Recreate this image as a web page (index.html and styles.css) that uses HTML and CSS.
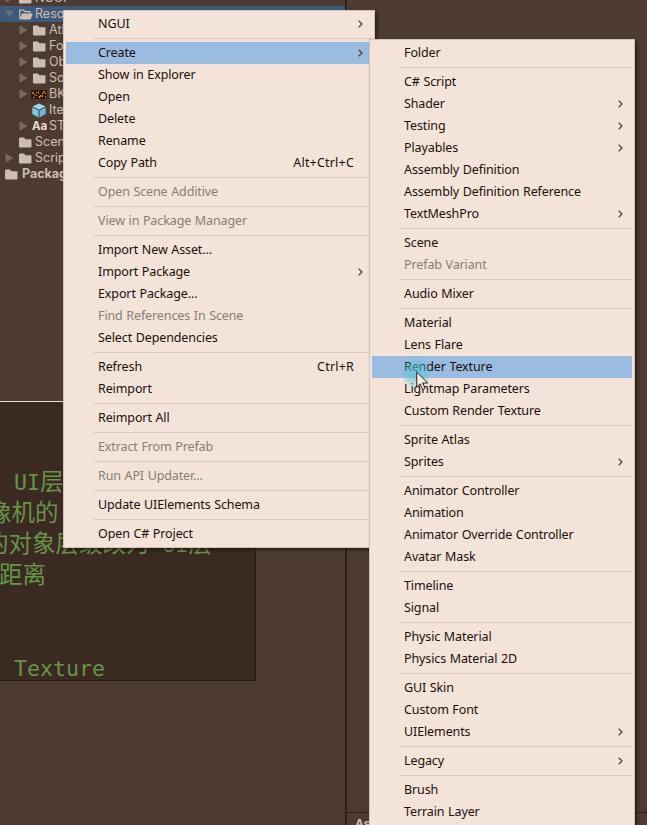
FILE: index.html
```html
<!DOCTYPE html>
<html lang="en">
<head>
<meta charset="utf-8">
<title>Project</title>
<link rel="stylesheet" href="styles.css">
</head>
<body>
<svg width="0" height="0" class="defs" aria-hidden="true">
  <symbol id="folder" viewBox="0 0 13 11"><path d="M0 1.6Q0 .5 1 .5H5L6.3 2.2H11.6Q12.5 2.2 12.5 3.2V9.6Q12.5 10.5 11.6 10.5H1Q0 10.5 0 9.6Z" fill="#cdbdb3"/></symbol>
  <symbol id="folder-open" viewBox="0 0 14 11"><path d="M.7 9.8V1.2H4.6L5.8 2.7H11V4.4" fill="none" stroke="#cdbdb3" stroke-width="1.2"/><path d="M3 4.4H13.8L11.6 10.4H.6Z" fill="#cdbdb3"/></symbol>
  <symbol id="right" viewBox="0 0 9 10"><path d="M.5 .2L8.6 5L.5 9.8Z" fill="#75685f"/></symbol>
  <symbol id="down" viewBox="0 0 10 9"><path d="M.5 .8H9.5L5 8.4Z" fill="#63727f"/></symbol>
  <symbol id="chev" viewBox="0 0 5 8"><path d="M.7 .8L4 4L.7 7.2" fill="none" stroke="#4a3f3a" stroke-width="1.2"/></symbol>
</svg>
<div class="app">
  <div class="left">
    <div class="tree">
      <div class="node d1"><svg class="arrow"><use href="#right"/></svg><svg class="ico"><use href="#folder"/></svg><span>NGUI</span></div>
      <div class="node d1 selected"><svg class="arrow"><use href="#down"/></svg><svg class="ico open"><use href="#folder-open"/></svg><span>Resources</span></div>
      <div class="node d2"><svg class="arrow"><use href="#right"/></svg><svg class="ico"><use href="#folder"/></svg><span>Atlas</span></div>
      <div class="node d2"><svg class="arrow"><use href="#right"/></svg><svg class="ico"><use href="#folder"/></svg><span>Font</span></div>
      <div class="node d2"><svg class="arrow"><use href="#right"/></svg><svg class="ico"><use href="#folder"/></svg><span>Obj</span></div>
      <div class="node d2"><svg class="arrow"><use href="#right"/></svg><svg class="ico"><use href="#folder"/></svg><span>Sound</span></div>
      <div class="node d2"><svg class="arrow"><use href="#right"/></svg><svg class="ico tex" viewBox="0 0 16 9"><path d="M0 0H16V9H0Z" fill="#301810"/><path d="M1 2h2v2H1zM4 5h2v1H4zM7 1h1v3H7zM9 5h3v2H9zM12 1h2v2h-2zM2 7h2v1H2zM14 6h1v2h-1z" fill="#c4652c"/><path d="M5 2h1v1H5zM8 6h1v2H8zM11 3h1v1h-1zM3 4h1v1H3zM14 3h1v1h-1z" fill="#e0a070"/></svg><span>BK</span></div>
      <div class="node d2"><svg class="arrow"></svg><svg class="ico cube" viewBox="0 0 14 15"><path d="M7 .5L13.5 3.5L7 6.8L.5 3.5Z" fill="#9bd7f3"/><path d="M.3 4.5L6.5 7.6V14.5L.3 11Z" fill="#7fc6ea"/><path d="M13.7 4.5L7.5 7.6V14.5L13.7 11Z" fill="#6ab6dd"/></svg><span>Item</span></div>
      <div class="node d2"><svg class="arrow"><use href="#right"/></svg><b class="ico aa">Aa</b><span>ST</span></div>
      <div class="node d1"><svg class="arrow"></svg><svg class="ico"><use href="#folder"/></svg><span>Scenes</span></div>
      <div class="node d1"><svg class="arrow"><use href="#right"/></svg><svg class="ico"><use href="#folder"/></svg><span>Scripts</span></div>
      <div class="node d0"><svg class="ico"><use href="#folder"/></svg><b>Packages</b></div>
    </div>
    <div class="code">
      <div class="line a">: UI<span class="han">层</span></div>
      <div class="line b"><span class="han">像机的</span></div>
      <div class="line c"><span class="han">的对象层级改为</span> UI<span class="han">层</span></div>
      <div class="line d"><span class="han">距离</span></div>
      <div class="line"></div>
      <div class="line"></div>
      <div class="line e">Texture</div>
    </div>
  </div>
  <div class="right"><div class="footer">Assets</div></div>
</div>

<div class="menu main">
  <div class="item">NGUI<svg class="chev"><use href="#chev"/></svg></div>
  <hr>
  <div class="item active">Create<svg class="chev"><use href="#chev"/></svg></div>
  <div class="item">Show in Explorer</div>
  <div class="item">Open</div>
  <div class="item">Delete</div>
  <div class="item">Rename</div>
  <div class="item">Copy Path<span class="key">Alt+Ctrl+C</span></div>
  <hr>
  <div class="item off">Open Scene Additive</div>
  <hr>
  <div class="item off">View in Package Manager</div>
  <hr>
  <div class="item">Import New Asset...</div>
  <div class="item">Import Package<svg class="chev"><use href="#chev"/></svg></div>
  <div class="item">Export Package...</div>
  <div class="item off">Find References In Scene</div>
  <div class="item">Select Dependencies</div>
  <hr>
  <div class="item">Refresh<span class="key">Ctrl+R</span></div>
  <div class="item">Reimport</div>
  <hr>
  <div class="item">Reimport All</div>
  <hr>
  <div class="item off">Extract From Prefab</div>
  <hr>
  <div class="item off">Run API Updater...</div>
  <hr>
  <div class="item">Update UIElements Schema</div>
  <hr>
  <div class="item">Open C# Project</div>
</div>

<div class="menu sub">
  <div class="item">Folder</div>
  <hr>
  <div class="item">C# Script</div>
  <div class="item">Shader<svg class="chev"><use href="#chev"/></svg></div>
  <div class="item">Testing<svg class="chev"><use href="#chev"/></svg></div>
  <div class="item">Playables<svg class="chev"><use href="#chev"/></svg></div>
  <div class="item">Assembly Definition</div>
  <div class="item">Assembly Definition Reference</div>
  <div class="item">TextMeshPro<svg class="chev"><use href="#chev"/></svg></div>
  <hr>
  <div class="item">Scene</div>
  <div class="item off">Prefab Variant</div>
  <hr>
  <div class="item">Audio Mixer</div>
  <hr>
  <div class="item">Material</div>
  <div class="item">Lens Flare</div>
  <div class="item active">Render Texture</div>
  <div class="item">Lightmap Parameters</div>
  <div class="item">Custom Render Texture</div>
  <hr>
  <div class="item">Sprite Atlas</div>
  <div class="item">Sprites<svg class="chev"><use href="#chev"/></svg></div>
  <hr>
  <div class="item">Animator Controller</div>
  <div class="item">Animation</div>
  <div class="item">Animator Override Controller</div>
  <div class="item">Avatar Mask</div>
  <hr>
  <div class="item">Timeline</div>
  <div class="item">Signal</div>
  <hr>
  <div class="item">Physic Material</div>
  <div class="item">Physics Material 2D</div>
  <hr>
  <div class="item">GUI Skin</div>
  <div class="item">Custom Font</div>
  <div class="item">UIElements<svg class="chev"><use href="#chev"/></svg></div>
  <hr>
  <div class="item">Legacy<svg class="chev"><use href="#chev"/></svg></div>
  <hr>
  <div class="item">Brush</div>
  <div class="item">Terrain Layer</div>
</div>
<div class="halo"></div>
<svg class="cursor" viewBox="0 0 13 20"><path d="M.7 1V16.2L4.2 12.9L6.7 18.6L9.2 17.5L6.7 12H11.8Z" fill="#f6e9e1" stroke="#30241f" stroke-width="1"/></svg>
</body>
</html>
```

FILE: styles.css
```css
* { box-sizing: border-box; }
body { margin: 0; width: 647px; height: 825px; overflow: hidden; position: relative; background: #4d3b32; font-family: "Noto Sans", sans-serif; }
.defs { position: absolute; }
.app { display: flex; height: 825px; }
.left { width: 345px; display: flex; flex-direction: column; overflow: hidden; }
.tree { height: 401px; font: 12.5px/16px Inter, sans-serif; color: #cdbdb3; overflow: hidden; }
.node { display: flex; align-items: center; height: 16px; white-space: nowrap; }
.node:first-child { margin-top: -10px; }
.node.selected { background: #3f5a78; }
.d0, .d1 { padding-left: 5px; }
.d2 { padding-left: 19px; }
.arrow { width: 9px; height: 10px; margin-right: 5px; flex: none; }
.ico { width: 13px; height: 11px; margin-right: 3px; flex: none; }
.d0 .ico { margin-right: 4px; }
.ico.open { width: 14px; margin-right: 2px; }
.ico.tex { width: 16px; height: 9px; margin-left: -2px; margin-right: 2px; }
.ico.cube { width: 14px; height: 15px; margin-left: -1px; }
.ico.aa { width: 15px; margin-left: -1px; margin-right: 2px; line-height: 11px; font-size: 11.5px; letter-spacing: -.2px; color: #ecdcd2; }
.code { width: 256px; height: 280px; border: 1px solid #281b15; border-top-color: #eadbd1; border-left: 0; background: #3a2a22; padding-top: 65px; overflow: hidden; font-family: "DejaVu Sans Mono", "Noto Sans CJK SC", monospace; font-size: 21.6px; color: #669449; }
.line { height: 31px; line-height: 31px; white-space: pre; }
.han { font-family: "Noto Sans CJK SC", sans-serif; font-size: 23.5px; line-height: 1; }
.line.a { margin-left: -12px; }
.line.b { margin-left: -12px; }
.line.c { margin-left: -15px; }
.line.d { margin-left: -1px; }
.line.e { margin-left: 14px; }
.right { flex: 1; border-left: 2px solid #2e201a; display: flex; flex-direction: column; justify-content: flex-end; }
.footer { height: 13px; border-top: 1px solid #2e201a; padding-left: 8px; font: bold 12px/22px Inter, sans-serif; color: #cdbdb3; overflow: hidden; }
.menu { position: absolute; padding: 2px; border: 1px solid #d3c3ba; background: #f4e3d9; color: #1c100b; font-size: 12.5px; box-shadow: 2px 2px 3px rgba(20, 8, 2, .55); }
.main { left: 63px; top: 10px; width: 312px; }
.sub { left: 369px; top: 39px; width: 266px; }
.item { height: 22px; line-height: 20px; padding: 0 9px 1px 32px; display: flex; align-items: center; white-space: nowrap; letter-spacing: -.11px; word-spacing: .5px; }
.active { background: #99bce0; }
.off { color: #8b7d75; }
.chev { width: 5px; height: 8px; margin-left: auto; flex: none; }
.key { margin-left: auto; margin-right: 9px; letter-spacing: .2px; }
hr { margin: 3px 0 3px 28px; height: 1px; border: 0; background: #d7c7be; }
.halo { position: absolute; left: 401px; top: 358px; width: 30px; height: 30px; border-radius: 50%; background: radial-gradient(circle, rgba(90, 200, 215, .6) 0 30%, rgba(90, 200, 215, .25) 62%, rgba(90, 200, 215, 0) 72%); }
.cursor { position: absolute; left: 416px; top: 371px; width: 13px; height: 20px; }
```
